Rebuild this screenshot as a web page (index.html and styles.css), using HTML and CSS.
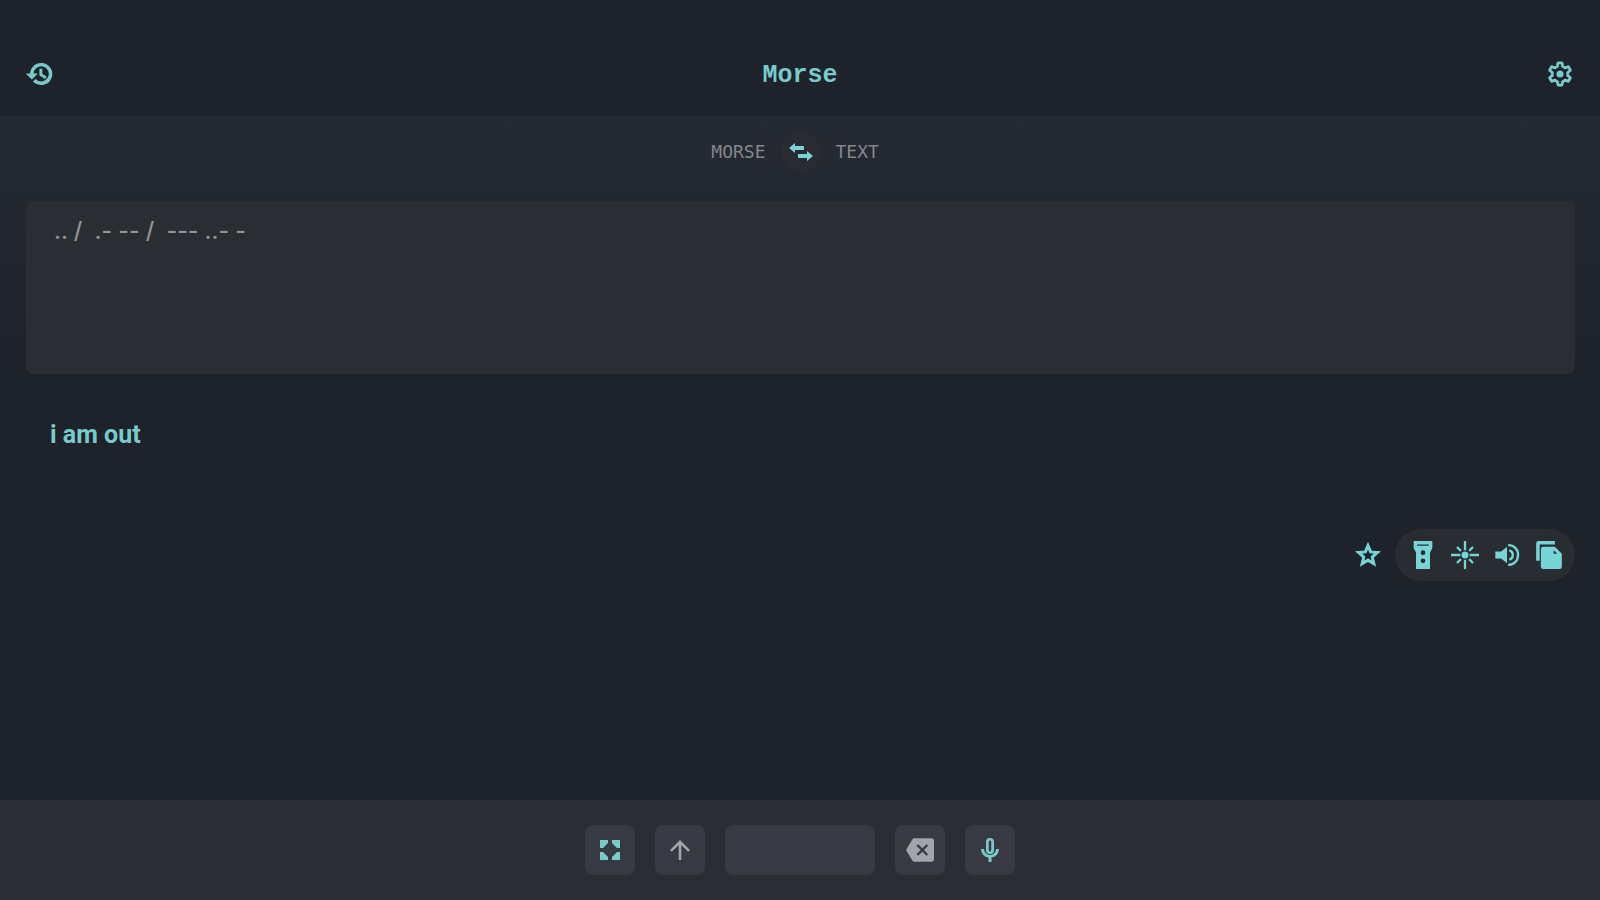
FILE: index.html
```html
<!DOCTYPE html>
<html lang="en">
<head>
    <meta charset="utf-8">
    <title>Morse</title>
    <link rel="stylesheet" href="styles.css">
</head>
<body>
    <header class="topbar">
        <button class="icon-btn" type="button" aria-label="History">
            <svg class="icon icon-bold" viewBox="0 0 24 24"><path d="M13 3a9 9 0 0 0-9 9H1l3.900 3.900.1.100L9 12H6a7 7 0 1 1 2.100 4.900l-1.400 1.500A9 9 0 1 0 13 3zm-1 5v5l4.300 2.500.7-1.200-3.500-2.100V8z"/></svg>
        </button>
        <h1 class="title">Morse</h1>
        <button class="icon-btn" type="button" aria-label="Settings">
            <svg class="icon" viewBox="0 0 24 24"><path fill="none" stroke="currentColor" stroke-width="2.400" stroke-linejoin="round" d="M10.300 2.500h3.400l.6 3 2 1.200 2.900-1 1.700 3-2.300 2v2.600l2.300 2-1.700 3-2.900-1-2 1.200-.6 3h-3.400l-.6-3-2-1.200-2.900 1-1.700-3 2.300-2v-2.600l-2.300-2 1.700-3 2.900 1 2-1.200z"/><circle cx="12" cy="12" r="3"/></svg>
        </button>
    </header>

    <main class="content">
        <div class="direction">
            <span class="direction-from">MORSE</span>
            <button class="swap" type="button" aria-label="Swap direction">
                <svg class="icon" viewBox="0 0 24 24"><path d="M0 8l6-5v3h9v4H6v3zM24 16l-6-5v3H9v4h9v3z"/></svg>
            </button>
            <span>TEXT</span>
        </div>

        <textarea class="input" aria-label="Morse code" spellcheck="false">.. /  .- -- /  --- ..- -</textarea>

        <output class="result">i am out</output>

        <div class="actions">
            <button class="icon-btn" type="button" aria-label="Favourite">
                <svg class="icon icon-bold" viewBox="0 0 24 24"><path fill-rule="evenodd" d="M22 9.200l-7.200-.6L12 2 9.200 8.600 2 9.200l5.500 4.800L5.800 21 12 17.300 18.200 21l-1.700-7zM12 15.400l-3.800 2.300 1-4.300-3.300-2.900 4.400-.4L12 6.100l1.700 4 4.400.4-3.300 2.900 1 4.300z"/></svg>
            </button>
            <div class="pill">
                <button class="icon-btn" type="button" aria-label="Flashlight">
                    <svg class="icon" viewBox="0 0 24 24"><path fill-rule="evenodd" d="M4 0h16v6l-2 4v14H6V10L4 6zm3 3v1h10V3zm5 5a2 2 0 1 0 0 4 2 2 0 0 0 0-4zm0 7a2 2 0 1 0 0 4 2 2 0 0 0 0-4z"/></svg>
                </button>
                <button class="icon-btn" type="button" aria-label="Flash screen">
                    <svg class="icon" viewBox="0 0 24 24"><path d="M11 0h2v8h-2zM11 16h2v8h-2zM0 11h8v2H0zM16 11h8v2h-8zM5.800 4.400l3.400 3.400-1.400 1.400-3.400-3.400zM18.200 4.400l1.400 1.400-3.400 3.400-1.400-1.400zM7.800 14.800l1.400 1.400-3.400 3.400-1.400-1.400zM16.200 14.800l3.400 3.400-1.400 1.400-3.400-3.400z"/><circle cx="12" cy="12" r="3"/></svg>
                </button>
                <button class="icon-btn" type="button" aria-label="Play sound">
                    <svg class="icon" viewBox="0 0 24 24"><path d="M2 9v6h5l5 4V5L7 9z"/><path fill="none" stroke="currentColor" stroke-width="2" d="M13 3.500c5 0 8.500 3.500 8.500 8.500s-3.500 8.500-8.500 8.500M14 8c4 1 4 7 0 8"/></svg>
                </button>
                <button class="icon-btn" type="button" aria-label="Copy">
                    <svg class="icon" viewBox="0 0 24 24"><path d="M17 0H3a2 2 0 0 0-2 2v15h3V3h13z"/><path fill-rule="evenodd" d="M7 5h10l6 6v11a2 2 0 0 1-2 2H7a2 2 0 0 1-2-2V7a2 2 0 0 1 2-2zm9 3v3h3z"/></svg>
                </button>
            </div>
        </div>
    </main>

    <footer class="keyboard">
        <button class="key" type="button" aria-label="Full screen">
            <svg class="icon" viewBox="0 0 24 24"><path d="M2 2h8v3L5 10H2zM14 2h8v8h-3l-5-5zM2 14h3l5 5v3H2zM19 14h3v8h-8v-3z"/></svg>
        </button>
        <button class="key key-muted" type="button" aria-label="Shift">
            <svg class="icon" viewBox="0 0 24 24"><path d="M2 12l1.800 1.800L10.700 7v15h2.600V7l6.900 6.800L22 12 12 2z"/></svg>
        </button>
        <button class="key key-space" type="button" aria-label="Space"></button>
        <button class="key key-muted key-delete" type="button" aria-label="Delete">
            <svg class="icon" viewBox="0 0 24 24"><path fill-rule="evenodd" d="M22 2H7c-.7 0-1.200.4-1.600.9L0 12l5.400 9.100c.4.500.9.900 1.600.9h15a2 2 0 0 0 2-2V4a2 2 0 0 0-2-2zm-3 13.600L17.600 17 14 13.400 10.400 17 9 15.600l3.600-3.600L9 8.400 10.400 7l3.600 3.600L17.600 7 19 8.400 15.400 12z"/></svg>
        </button>
        <button class="key" type="button" aria-label="Speak">
            <svg class="icon" viewBox="0 0 24 24"><path fill-rule="evenodd" d="M12 0a4 4 0 0 0-4 4v8a4 4 0 0 0 8 0V4a4 4 0 0 0-4-4zm0 2.500c.8 0 1.300.6 1.300 1.500v8c0 .9-.5 1.500-1.300 1.500s-1.300-.6-1.300-1.500V4c0-.9.500-1.500 1.300-1.500zM3 11h3a6 6 0 0 0 12 0h3a8.500 8.500 0 0 1-7.500 8.500V24h-3v-4.500A8.500 8.500 0 0 1 3 11z"/></svg>
        </button>
    </footer>
</body>
</html>
```
FILE: styles.css
```css
* {
    box-sizing: border-box;
}

body {
    display: flex;
    flex-direction: column;
    min-height: 100vh;
    margin: 0;
    background: #1e222a;
    color: #77cccb;
    font-family: Roboto, sans-serif;
}

button {
    display: flex;
    align-items: center;
    justify-content: center;
    padding: 0;
    border: 0;
    background: none;
    color: inherit;
    cursor: pointer;
}

.icon {
    display: block;
    width: 28px;
    height: 28px;
    fill: currentColor;
}

.icon-bold {
    stroke: currentColor;
    stroke-width: 1;
}

.topbar {
    display: flex;
    align-items: center;
    justify-content: space-between;
    padding: 56px 26px 24px;
}

.title {
    margin: 0;
    padding-top: 4px;
    font: bold 25px/32px "Liberation Mono", monospace;
}

.content {
    display: flex;
    flex: 1;
    flex-direction: column;
    padding: 16px 25px 0 26px;
    background: linear-gradient(#252932, #1e222a 260px);
}

.direction {
    display: grid;
    grid-template-columns: 1fr 40px 1fr;
    align-items: center;
    gap: 15px;
    color: #85868c;
    font: 18px/24px "DejaVu Sans Mono", monospace;
}

.direction-from {
    text-align: right;
}

.swap {
    height: 40px;
    border-radius: 50%;
    background: #292b31;
    color: #77d5d7;
}

.swap .icon {
    width: 24px;
    height: 24px;
}

.input {
    display: block;
    height: 173px;
    margin-top: 29px;
    padding: 14px 28px;
    border: 0;
    border-radius: 8px;
    outline: 0;
    background: #2a2d31;
    color: #929396;
    font: 500 23px/32px Inter, sans-serif;
    resize: none;
}

.result {
    margin-top: 43px;
    padding: 0 24px;
    font-size: 25px;
    font-weight: bold;
    line-height: 36px;
}

.actions {
    display: flex;
    justify-content: flex-end;
    align-items: center;
    gap: 13px;
    margin-top: 76px;
    color: #77d5d7;
}

.pill {
    display: flex;
    gap: 14px;
    padding: 12px 12px 12px 14px;
    border-radius: 26px;
    background: #292c31;
}

.keyboard {
    display: flex;
    justify-content: center;
    gap: 20px;
    padding: 25px;
    background: #2a2d31;
}

.key {
    width: 50px;
    height: 50px;
    border-radius: 8px;
    background: #383943;
}

.key .icon {
    width: 24px;
    height: 24px;
}

.key-muted {
    color: #a3a3ab;
}

.key-delete .icon {
    width: 30px;
    height: 28px;
}

.key-space {
    width: 150px;
}
```
